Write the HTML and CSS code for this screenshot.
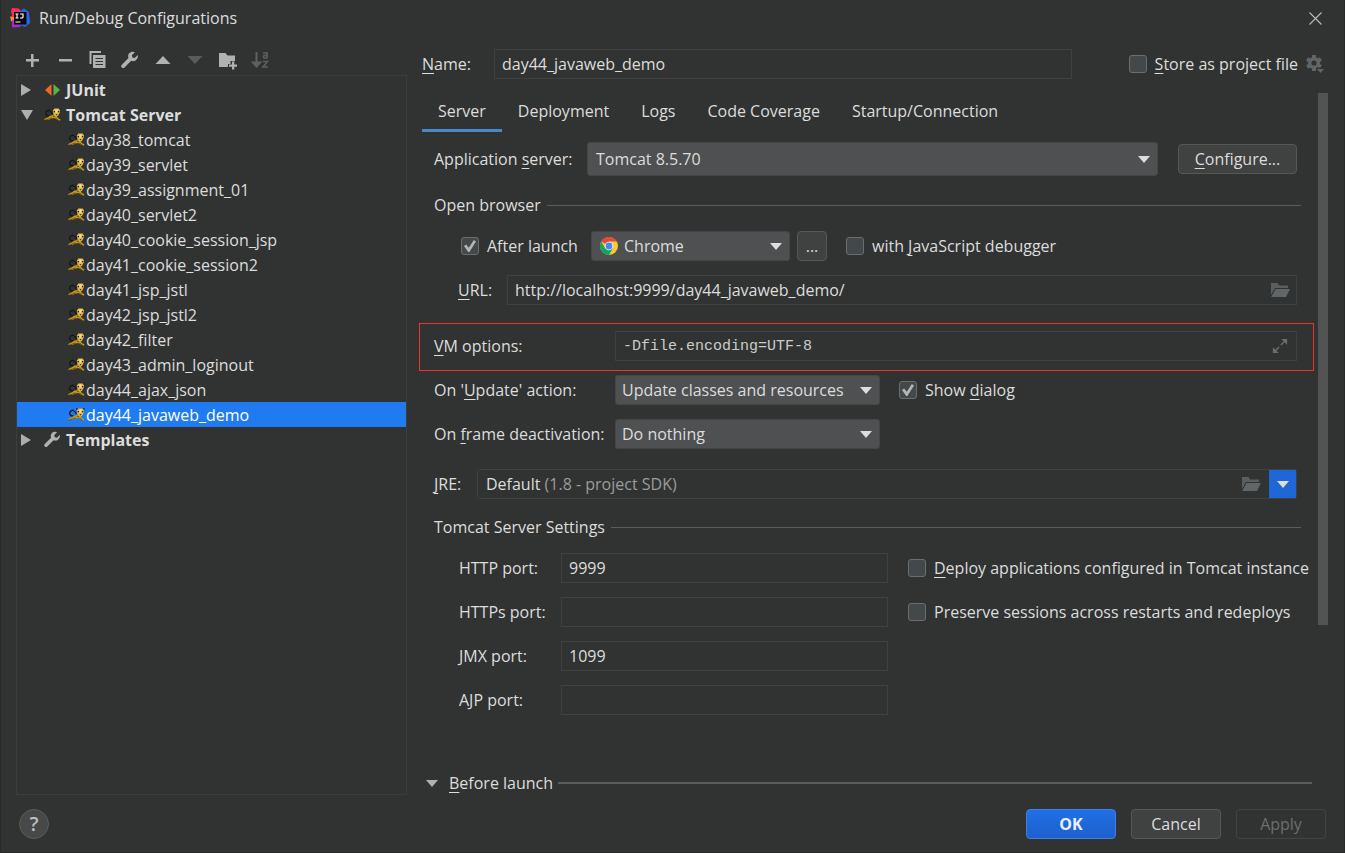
FILE: index.html
```html
<!DOCTYPE html>
<html lang="en">
<head>
<meta charset="utf-8">
<title>Run/Debug Configurations</title>
<link rel="stylesheet" href="styles.css">
</head>
<body>
<svg class="defs" aria-hidden="true">
  <symbol id="cat" viewBox="0 0 17 13">
    <path d="M5.500 8C2 8 1 6 2 4S5 1.800 6 3M6.500 3l2 3" fill="none" stroke="#151615" stroke-width="1.300"/>
    <path d="M0 12l1-1.500L3.500 9.500 6 7.700l3.500-.7 3 .8 1.500 2.200 2.500 1.500-.8 1.200-3-1.200-2.200-1.500-3 .6-2.500 1.200-3.200.3z" fill="#c3961a"/>
    <path d="M.5 12.300l4-1.200 3-1.300M11.500 10l3 2.500M9 8.300h2" stroke="#54410d" stroke-width=".8" fill="none"/>
    <path d="M8.700.6h7.600l-.6 4.200-1.600 3-2 .9-2.600-2z" fill="#dcb650"/>
    <path d="M8 0l2.300.6L8.700 2.600zM16.800 0l-2.200.6 1.700 2zM9.700 3h1.400v1.200H9.700zM13.800 3h1.400v1.200h-1.400zM11.500 6.200h2l-1 1.300z" fill="#191815"/>
    <path d="M11.300 1.300h2.300v3.400h-2.300z" fill="#f6dc8c"/>
  </symbol>
  <symbol id="wrench" viewBox="0 0 18 18">
    <path d="M16.700 4.100l-3 3-2.300-.5-.5-2.300 3-3C11.800.200 9.500.800 8.200 2.300 7 3.700 6.900 5.500 7.500 7.100L.8 13.800c-.8.800-.8 1.800 0 2.600.8.800 1.900.800 2.700 0l6.700-6.600c1.700.7 3.500.4 4.900-.9 1.500-1.300 2.200-2.900 1.600-4.800z" fill="#afb1b3"/>
  </symbol>
  <symbol id="folder" viewBox="0 0 20 16">
    <path d="M1 1h6.500l1.700 2.500H18V6H5L1 13z" fill="#595e60"/>
    <path d="M5.500 7H20l-4 8H1.200z" fill="#616669"/>
  </symbol>
  <symbol id="down" viewBox="0 0 12 7"><path d="M0 0h12L6 7z" fill="currentColor"/></symbol>
</svg>

<div class="window">
  <header class="titlebar">
    <svg class="logo" viewBox="0 0 20 20" aria-hidden="true">
      <path d="M2 0l7 .5 2 3L4 13l-3-1 1-5-1-4z" fill="#fd2d63"/>
      <path d="M0 8.500l4 .5v6l-3-2z" fill="#fb8a22"/>
      <path d="M2 12l7 2 2 5-9 .5z" fill="#a52ad0"/>
      <path d="M10 3l4-2.500L19 4l1 11-5 4-5-2z" fill="#2d63e8"/>
      <rect x="4" y="4" width="12.500" height="12.500" fill="#090909"/>
      <path d="M5.500 6h3M7 6v4M5.500 10h3M10 6h3v3q0 1.200-1.500 1H10M5.500 14h5" fill="none" stroke="#fff" stroke-width="1.200"/>
    </svg>
    <h1>Run/Debug Configurations</h1>
    <button class="icon-btn close" aria-label="Close"><svg viewBox="0 0 13 13"><path d="M.5.5l12 12M12.500.5l-12 12" stroke="#b9bab9" stroke-width="1.100"/></svg></button>
  </header>

  <div class="content">
    <aside class="sidebar">
      <div class="toolbar">
        <button class="icon-btn" aria-label="Add"><svg viewBox="0 0 20 20"><path d="M9 4h2.500v5H17v2.500h-5.500V17H9v-5.500H4V9h5z" fill="#afb1b3"/></svg></button>
        <button class="icon-btn" aria-label="Remove"><svg viewBox="0 0 20 20"><path d="M4 9h13v2.500H4z" fill="#afb1b3"/></svg></button>
        <button class="icon-btn" aria-label="Copy"><svg viewBox="0 0 20 20"><path d="M1.500 1h11.500v2H3.500v11h-2z" fill="#afb1b3"/><path d="M5 5h12.500v13H5z" fill="#afb1b3"/><path d="M7.500 8.500h7.500M7.500 11.500h7.500M7.500 14.500h7.500" stroke="#313332" stroke-width="1.200"/></svg></button>
        <button class="icon-btn" aria-label="Edit templates"><svg class="wrench"><use href="#wrench"/></svg></button>
        <button class="icon-btn" aria-label="Move up"><svg viewBox="0 0 20 20"><path d="M10 6l7.500 8h-15z" fill="#afb1b3"/></svg></button>
        <button class="icon-btn" aria-label="Move down" disabled><svg viewBox="0 0 20 20"><path d="M10 14l7.500-8h-15z" fill="#5a5c5c"/></svg></button>
        <button class="icon-btn" aria-label="New folder"><svg viewBox="0 0 20 20"><path d="M1 3h6.500l2 2.500H17V11h-4.500v3H10v3H1z" fill="#afb1b3"/><path d="M14 11.500h2.300v3H19v2.300h-2.700V19.500H14v-2.700h-3v-2.300h3z" fill="#afb1b3"/></svg></button>
        <button class="icon-btn" aria-label="Sort" disabled><svg viewBox="0 0 20 20"><path d="M5.500 2v11M2 12.500L5.500 16.500 9 12.500z" stroke="#5e6060" stroke-width="2" fill="#5e6060"/><path d="M12 3h4v5h-3q-1.200-1.500 0-2.500h3M12 11.500h4.500L12 17h5" fill="none" stroke="#5e6060" stroke-width="1.500"/></svg></button>
      </div>
      <ul class="tree">
        <li class="row group"><svg class="right" viewBox="0 0 12 12"><path d="M0 0l10 6-10 6z"/></svg><svg class="ico" viewBox="0 0 17 16"><path d="M7.500 2v12L1 8z" fill="#f26522"/><path d="M9.500 2v12L16 8z" fill="#59b344"/></svg>JUnit</li>
        <li class="row group"><svg class="right" viewBox="0 0 12 12"><path d="M0 1h12L6 11z"/></svg><svg class="ico cat"><use href="#cat"/></svg>Tomcat Server</li>
        <li class="row leaf"><svg class="ico cat"><use href="#cat"/></svg>day38_tomcat</li>
        <li class="row leaf"><svg class="ico cat"><use href="#cat"/></svg>day39_servlet</li>
        <li class="row leaf"><svg class="ico cat"><use href="#cat"/></svg>day39_assignment_01</li>
        <li class="row leaf"><svg class="ico cat"><use href="#cat"/></svg>day40_servlet2</li>
        <li class="row leaf"><svg class="ico cat"><use href="#cat"/></svg>day40_cookie_session_jsp</li>
        <li class="row leaf"><svg class="ico cat"><use href="#cat"/></svg>day41_cookie_session2</li>
        <li class="row leaf"><svg class="ico cat"><use href="#cat"/></svg>day41_jsp_jstl</li>
        <li class="row leaf"><svg class="ico cat"><use href="#cat"/></svg>day42_jsp_jstl2</li>
        <li class="row leaf"><svg class="ico cat"><use href="#cat"/></svg>day42_filter</li>
        <li class="row leaf"><svg class="ico cat"><use href="#cat"/></svg>day43_admin_loginout</li>
        <li class="row leaf"><svg class="ico cat"><use href="#cat"/></svg>day44_ajax_json</li>
        <li class="row leaf selected"><svg class="ico cat"><use href="#cat"/></svg>day44_javaweb_demo</li>
        <li class="row group"><svg class="right" viewBox="0 0 12 12"><path d="M0 0l10 6-10 6z"/></svg><svg class="ico wr"><use href="#wrench"/></svg>Templates</li>
      </ul>
    </aside>

    <main class="editor">
      <div class="name-row">
        <label class="name-label" for="name"><u>N</u>ame:</label>
        <input class="field" id="name" type="text" value="day44_javaweb_demo">
        <label class="check store"><input type="checkbox"><span><u>S</u>tore as project file</span></label>
        <button class="icon-btn gear" aria-label="Storage options"><svg viewBox="0 0 18 18"><g stroke="#626565" stroke-width="4"><path d="M8 0v16M1.100 4l13.800 8M1.100 12L14.900 4"/></g><circle cx="8" cy="8" r="6" fill="#626565"/><circle cx="8" cy="8" r="2.600" fill="#313332"/><path d="M10 12.500h9v6h-9z" fill="#313332"/><path d="M11 14h7l-3.500 4z" fill="#626565"/></svg></button>
      </div>

      <div class="scroller">
        <div class="pane">
          <nav class="tabs">
            <button class="tab active">Server</button>
            <button class="tab">Deployment</button>
            <button class="tab">Logs</button>
            <button class="tab">Code Coverage</button>
            <button class="tab">Startup/Connection</button>
          </nav>

          <form class="form">
            <div class="line">
              <label class="app-label" for="server">Application <u>s</u>erver:</label>
              <div class="combo tall grow"><select id="server"><option>Tomcat 8.5.70</option></select><svg class="arrow"><use href="#down"/></svg></div>
              <button type="button" class="btn configure"><span><u>C</u>onfigure...</span></button>
            </div>

            <h2 class="section first">Open browser</h2>

            <div class="line launch">
              <label class="check after"><input type="checkbox" checked><span>After launch</span></label>
              <div class="combo browser"><select id="browser" aria-label="Browser"><option>Chrome</option></select>
                <svg class="chrome" viewBox="0 0 18 18"><circle cx="9" cy="9" r="9" fill="#fbc934"/><path d="M9 9L1.200 4.500A9 9 0 0 1 16.800 4.500H9z" fill="#e04a3f"/><path d="M1.200 4.500A9 9 0 0 0 9 18l4-6.800L5 11z" fill="#1ba261"/><circle cx="9" cy="9" r="4.300" fill="#f4f4f4"/><circle cx="9" cy="9" r="3.400" fill="#4687f4"/></svg>
                <svg class="arrow"><use href="#down"/></svg></div>
              <button type="button" class="btn dots" aria-label="Browsers">...</button>
              <label class="check"><input type="checkbox"><span>with <u>J</u>avaScript debugger</span></label>
            </div>

            <div class="line url">
              <label class="url-label" for="url"><u>U</u>RL:</label>
              <div class="stack grow"><input class="field" id="url" type="text" value="http://localhost:9999/day44_javaweb_demo/"><svg class="end"><use href="#folder"/></svg></div>
            </div>

            <div class="line vm">
              <label class="opt-label" for="vm"><u>V</u>M options:</label>
              <div class="stack grow"><input class="field mono" id="vm" type="text" value="-Dfile.encoding=UTF-8"><svg class="end expand" viewBox="0 0 18 18"><path d="M10.500 1H17v6.500zM1 10.500V17h6.500z" fill="#696e70"/><path d="M10 8l4-4M8 10l-4 4" stroke="#696e70" stroke-width="1.600"/></svg></div>
            </div>

            <div class="line update">
              <label class="opt-label" for="update">On '<u>U</u>pdate' action:</label>
              <div class="combo option"><select id="update"><option>Update classes and resources</option></select><svg class="arrow"><use href="#down"/></svg></div>
              <label class="check"><input type="checkbox" checked><span>Show <u>d</u>ialog</span></label>
            </div>

            <div class="line frame">
              <label class="opt-label" for="frame">On <u>f</u>rame deactivation:</label>
              <div class="combo option"><select id="frame"><option>Do nothing</option></select><svg class="arrow"><use href="#down"/></svg></div>
            </div>

            <div class="line jre">
              <span class="jre-label"><u>J</u>RE:</span>
              <div class="jre-box grow"><span class="jre-text">Default <span class="dim">(1.8 - project SDK)</span></span><svg class="jre-folder"><use href="#folder"/></svg><button type="button" class="jre-btn" aria-label="Choose JRE"><svg class="arrow"><use href="#down"/></svg></button></div>
            </div>

            <h2 class="section second">Tomcat Server Settings</h2>

            <div class="settings">
              <div class="ports">
                <label for="http">HTTP port:</label><input class="field" id="http" type="text" value="9999">
                <label for="https">HTTPs port:</label><input class="field" id="https" type="text">
                <label for="jmx">JMX port:</label><input class="field" id="jmx" type="text" value="1099">
                <label for="ajp">AJP port:</label><input class="field" id="ajp" type="text">
              </div>
              <div class="flags">
                <label class="check"><input type="checkbox"><span><u>D</u>eploy applications configured in Tomcat instance</span></label>
                <label class="check"><input type="checkbox"><span>Preserve sessions across restarts and redeploys</span></label>
              </div>
            </div>
          </form>
        </div>
        <div class="track"><div class="thumb"></div></div>
      </div>

      <h2 class="before"><svg class="arrow"><use href="#down"/></svg><span><u>B</u>efore launch</span></h2>
    </main>
  </div>

  <footer class="footer">
    <button class="help" aria-label="Help">?</button>
    <button class="btn primary">OK</button>
    <button class="btn wide">Cancel</button>
    <button class="btn wide" disabled>Apply</button>
  </footer>
</div>
</body>
</html>
```

FILE: styles.css
```css
* { box-sizing: border-box; }

body {
  margin: 0;
  background: #313332;
  color: #dcdddd;
  font: 16px/22px "Open Sans", "Noto Sans", sans-serif;
}

button, input, select { font: inherit; color: inherit; }
u { text-decoration: underline; text-underline-offset: 3px; text-decoration-thickness: 1px; text-decoration-skip-ink: none; }
h1, h2 { margin: 0; font-size: inherit; font-weight: 400; }
.defs { display: none; }
.grow { flex: 1; min-width: 0; }

.window {
  display: flex;
  flex-direction: column;
  min-height: 100vh;
  border: 1px solid #282a29;
  border-top: 0;
}

/* Title bar */
.titlebar { display: flex; align-items: center; gap: 9px; height: 36px; padding: 0 16px 0 9px; }
.logo { width: 20px; height: 20px; }
.titlebar h1 { flex: 1; }
.icon-btn { display: grid; place-items: center; padding: 0; border: 0; background: none; }
.close { width: 26px; height: 26px; }
.close svg { width: 13px; height: 13px; }

.content { display: flex; flex: 1; gap: 15px; padding: 0 16px 0 15px; }

/* Tree */
.sidebar { display: flex; flex-direction: column; width: 391px; }
.toolbar { display: grid; grid-template-columns: repeat(8, 1fr); width: 261px; height: 39px; padding-top: 8px; }
.toolbar svg { width: 20px; height: 20px; }
.toolbar .wrench { width: 18px; height: 18px; }
.tree { flex: 1; margin: 0; padding: 1px 0; list-style: none; border: 1px solid #3b3d3c; }
.row { display: flex; align-items: center; height: 25px; padding-left: 4px; line-height: 20px; }
.group { font-weight: 700; }
.leaf { padding-left: 51px; }
.selected { background: #1f7bef; color: #fff; }
.right { width: 12px; height: 12px; margin-right: 11px; fill: #adafaf; }
.ico { width: 17px; height: 16px; margin-right: 5px; }
.leaf .ico { margin-right: 1px; }
.cat { height: 13px; }
.wr { height: 17px; }

/* Editor */
.editor { display: flex; flex: 1; flex-direction: column; min-width: 0; padding-bottom: 1px; }
.name-row { display: flex; align-items: center; height: 30px; margin-top: 13px; padding-right: 4px; }
.name-label { width: 72px; }
.field {
  flex: 1;
  width: 100%;
  min-width: 0;
  height: 30px;
  padding: 0 7px;
  border: 1px solid #3f4140;
  background: transparent;
  outline: 0;
}
.mono { color: #cacbcb; font: 15px/22px "Liberation Mono", monospace; }
.check { display: flex; align-items: center; gap: 8px; white-space: nowrap; }
.check input {
  display: grid;
  flex: none;
  place-items: center;
  width: 18px;
  height: 18px;
  margin: 0;
  appearance: none;
  border: 1px solid #6b6e6f;
  border-radius: 3px;
  background: #43494a;
}
.check input:checked::after {
  content: "";
  width: 12px;
  height: 12px;
  background: #b4b6b6;
  clip-path: polygon(0 50%, 18% 38%, 40% 65%, 82% 0, 100% 12%, 45% 100%, 35% 100%);
}
.store { margin-left: 57px; }
.gear { margin-left: 8px; }
.gear svg { width: 18px; height: 18px; }

.scroller { display: flex; flex: 1; margin-top: 14px; border-bottom: 1px solid #2f3130; }
.pane { flex: 1; min-width: 0; }
.track { width: 10px; }
.thumb { height: 82%; background: #525454; }

.tabs { display: flex; }
.tab { height: 39px; padding: 0 16px; border: 0; border-bottom: 3px solid transparent; background: none; }
.active { border-bottom-color: #4a88c7; }

.form { padding: 10px 21px 27px 12px; }
.line { display: flex; align-items: center; min-height: 30px; }
.combo, .stack { display: grid; align-items: center; }
.combo > *, .stack > * { grid-area: 1 / 1; }
.combo select {
  width: 100%;
  height: 30px;
  padding: 0 28px 0 6px;
  appearance: none;
  border: 1px solid #434546;
  border-radius: 3px;
  background: #4e5052;
  outline: 0;
}
.combo.tall select { height: 34px; padding-left: 8px; }
.combo.browser select { padding-left: 32px; }
.arrow { justify-self: end; width: 12px; height: 7px; margin-right: 8px; color: #dcdddd; pointer-events: none; }
.btn {
  height: 30px;
  padding: 0;
  border: 1px solid #565858;
  border-radius: 4px;
  background: #404141;
}

.app-label { width: 153px; }
.configure { width: 119px; margin-left: 20px; }

.section { display: flex; align-items: center; gap: 6px; margin-right: -4px; }
.section::after { content: ""; flex: 1; height: 1px; background: #5b5d5d; }
.first { margin-top: 18px; }
.second { margin-top: 17px; }

.launch { margin-top: 15px; padding-left: 27px; }
.after { width: 130px; }
.browser { width: 199px; }
.chrome { width: 18px; height: 18px; margin-left: 9px; pointer-events: none; }
.dots { width: 30px; margin: 0 19px 0 7px; }

.url { margin-top: 14px; padding-left: 24px; }
.url-label { width: 49px; }
.end { justify-self: end; width: 20px; height: 16px; margin-right: 7px; pointer-events: none; }

.vm { margin: 18px -17px 0 -15px; padding: 7px 16px 9px 14px; border: 1px solid #f0332f; }
.opt-label { width: 181px; white-space: nowrap; }
.update { margin-top: 4px; }
.option { width: 265px; margin-right: 19px; }
.frame { margin-top: 14px; }

.jre { margin-top: 20px; }
.jre-label { width: 43px; }
.jre-box { display: flex; align-items: center; height: 30px; border: 1px solid #3f4140; border-radius: 3px; }
.jre-text { flex: 1; padding-left: 8px; }
.dim { color: #9a9c9d; }
.jre-folder { width: 20px; height: 16px; margin-right: 8px; }
.jre-btn { display: grid; place-items: center; width: 27px; height: 28px; padding: 0; border: 0; background: #1f66d6; }
.jre-btn .arrow { justify-self: center; margin: 0; }

.settings { display: flex; gap: 20px; margin: 15px -5px 0 25px; }
.ports { display: grid; flex: 1; grid-template-columns: 102px 1fr; gap: 14px 0; align-items: center; }
.flags { display: flex; flex-direction: column; gap: 14px; width: 394px; }
.flags .check { height: 30px; }

.before { display: flex; align-items: center; margin: 29px 16px 0 4px; }
.before span { margin: 0 5px 0 11px; }
.before .arrow { margin: 0; color: #afb1b3; }
.before::after { content: ""; flex: 1; height: 2px; background: #5b5d5d; }

/* Footer */
.footer { display: flex; align-items: center; gap: 15px; padding: 14px 18px 13px; }
.help { width: 30px; height: 30px; margin-right: auto; padding: 0; border: 1px solid #5a5c5c; border-radius: 50%; background: #474848; color: #bcbebe; font-size: 20px; font-weight: 600; }
.primary, .wide { width: 90px; }
.primary { border-color: #3f7fe0; background: linear-gradient(#2070e6, #1d60cc); color: #e8efff; font-weight: 700; }
.btn:disabled { border-color: #424443; background: transparent; color: #6c6e6e; }
```
